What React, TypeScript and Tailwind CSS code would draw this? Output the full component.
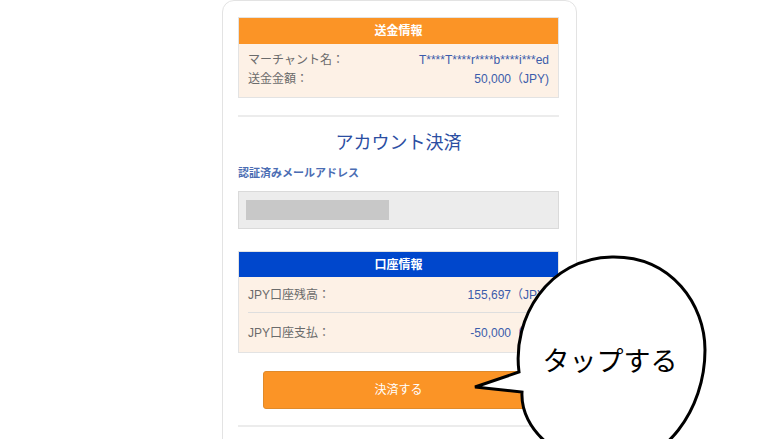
import React from 'react';

const font = "font-['Liberation_Sans','Noto_Sans_CJK_JP',sans-serif]";

function InfoRow({ label, value }: { label: string; value: string }) {
  return (
    <div className="flex items-center justify-between text-[12px] leading-[19px]">
      <span className="text-[#6b6b6b]">{label}</span>
      <span className="text-[#3b5cab]">{value}</span>
    </div>
  );
}

function SpeechBubble() {
  return (
    <svg
      className="absolute left-0 top-0 pointer-events-none"
      width="780"
      height="439"
      viewBox="0 0 780 439"
    >
      <path
        d="M519 372 C 512 318, 548 258, 612 257 C 672 256, 705 305, 705 350 C 705 410, 665 465, 612 465 C 560 465, 520 430, 522 392 L 475 387 Z"
        fill="#fff"
        stroke="#000"
        strokeWidth="3"
        strokeLinejoin="miter"
      />
    </svg>
  );
}

export default function App() {
  return (
    <div className={`relative w-[780px] h-[439px] overflow-hidden bg-white ${font}`}>
      <div className="flex pl-[222px]">
        <div className="w-[355px] h-[460px] border border-[#e3e3e3] rounded-t-xl bg-white pl-[15px] pr-[17px] pt-[16px]">
          {/* 送金情報 */}
          <div className="border border-[#e3e3e3]">
            <div className="h-[26px] bg-[#fb9426] text-white text-[12px] font-bold flex items-center justify-center">
              送金情報
            </div>
            <div className="bg-[#fdf1e6] px-[9px] pt-[7px] pb-[8px]">
              <InfoRow label="マーチャント名：" value="T****T****r****b****i***ed" />
              <InfoRow label="送金金額：" value="50,000（JPY)" />
            </div>
          </div>

          <div className="mt-[17px] border-t-2 border-[#ececec]" />

          <h2 className="mt-[11px] text-center text-[18px] leading-[26px] text-[#2b4ea2] font-['Noto_Sans_CJK_JP',sans-serif]">
            アカウント決済
          </h2>

          <div className="mt-[11px] text-[11px] leading-[16px] font-bold text-[#4b6db3]">
            認証済みメールアドレス
          </div>

          <div className="mt-[10px] h-[38px] bg-[#ececec] border border-[#dadada] flex items-center px-[7px]">
            <div className="w-[143px] h-[20px] bg-[#c8c8c8]" />
          </div>

          {/* 口座情報 */}
          <div className="mt-[22px] border border-[#e3e3e3]">
            <div className="h-[25px] bg-[#0047cc] text-white text-[12px] font-bold flex items-center justify-center">
              口座情報
            </div>
            <div className="bg-[#fdf1e6] px-[9px]">
              <div className="h-[36px] flex items-center justify-between text-[12px] border-b border-[#dedede]">
                <span className="text-[#6b6b6b]">JPY口座残高：</span>
                <span className="text-[#3b5cab]">155,697（JPY)</span>
              </div>
              <div className="h-[39px] flex items-center justify-between text-[12px]">
                <span className="text-[#6b6b6b]">JPY口座支払：</span>
                <span className="text-[#3b5cab]">-50,000（JPY)</span>
              </div>
            </div>
          </div>

          <div className="mt-[18px] flex justify-center">
            <button className="w-[271px] h-[38px] rounded-[3px] bg-[#fb9426] border border-[#e08a2a] text-white text-[12px]">
              決済する
            </button>
          </div>

          <div className="mt-[16px] border-t-2 border-[#ececec]" />
        </div>
      </div>

      <SpeechBubble />
      <div className="absolute left-[525px] top-[341px] w-[170px] text-center text-[27px] leading-[38px] text-black font-['Noto_Sans_CJK_JP',sans-serif]">
        タップする
      </div>
    </div>
  );
}
